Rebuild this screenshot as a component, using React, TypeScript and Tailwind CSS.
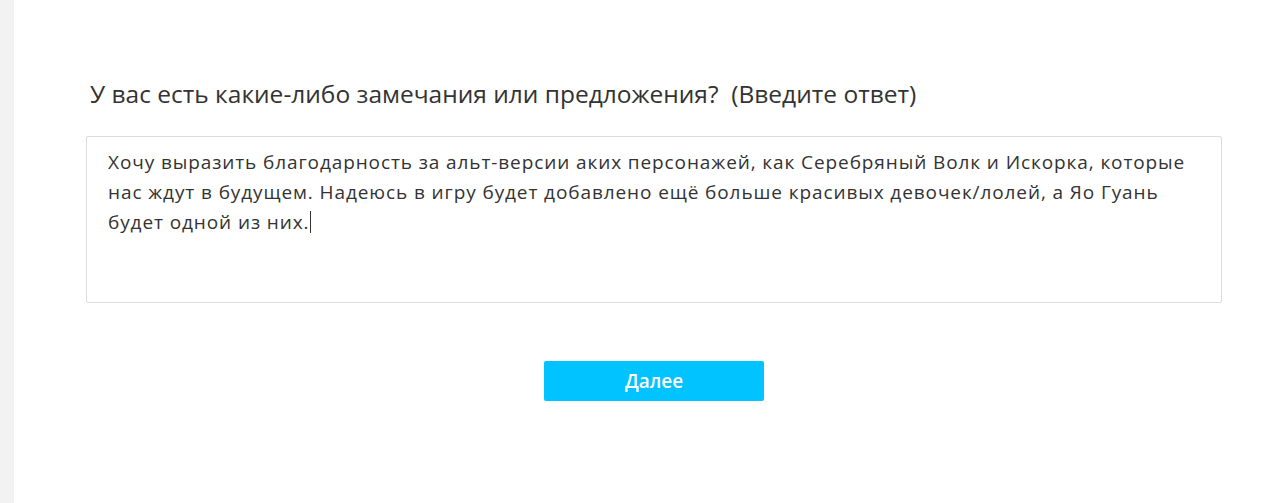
export default function App() {
  return (
    <div className="flex h-[503px] w-full bg-white" style={{ fontFamily: '"Open Sans", "Noto Sans", sans-serif' }}>
      <div className="w-[14px] shrink-0 bg-[#f2f2f2]" />
      <div className="flex-1 pl-[72px] pt-[76px]">
        <div className="w-[1136px]">
          <h2 className="pl-[4px] text-[24.5px] leading-[36px] text-[#333]">
            У вас есть какие-либо замечания или предложения?&nbsp; (Введите ответ)
          </h2>
          <div className="mt-[24px] h-[167px] rounded-[2px] border border-[#dcdcdc] pl-[21px] pr-[30px] py-[10px] text-[19px] leading-[30px] tracking-[0.9px] text-[#333]">
            Хочу выразить благодарность за альт-версии аких персонажей, как Серебряный Волк и Искорка, которые нас ждут в будущем. Надеюсь в игру будет добавлено ещё больше красивых девочек/лолей, а Яо Гуань будет одной из них.
            <span className="ml-px inline-block h-[22px] w-px translate-y-[4px] bg-[#333]" />
          </div>
          <div className="mt-[58px] flex justify-center">
            <button type="button" className="h-[40px] w-[220px] rounded-[2px] bg-[#00c3ff] text-[19px] font-semibold text-white">
              Далее
            </button>
          </div>
        </div>
      </div>
    </div>
  );
}
